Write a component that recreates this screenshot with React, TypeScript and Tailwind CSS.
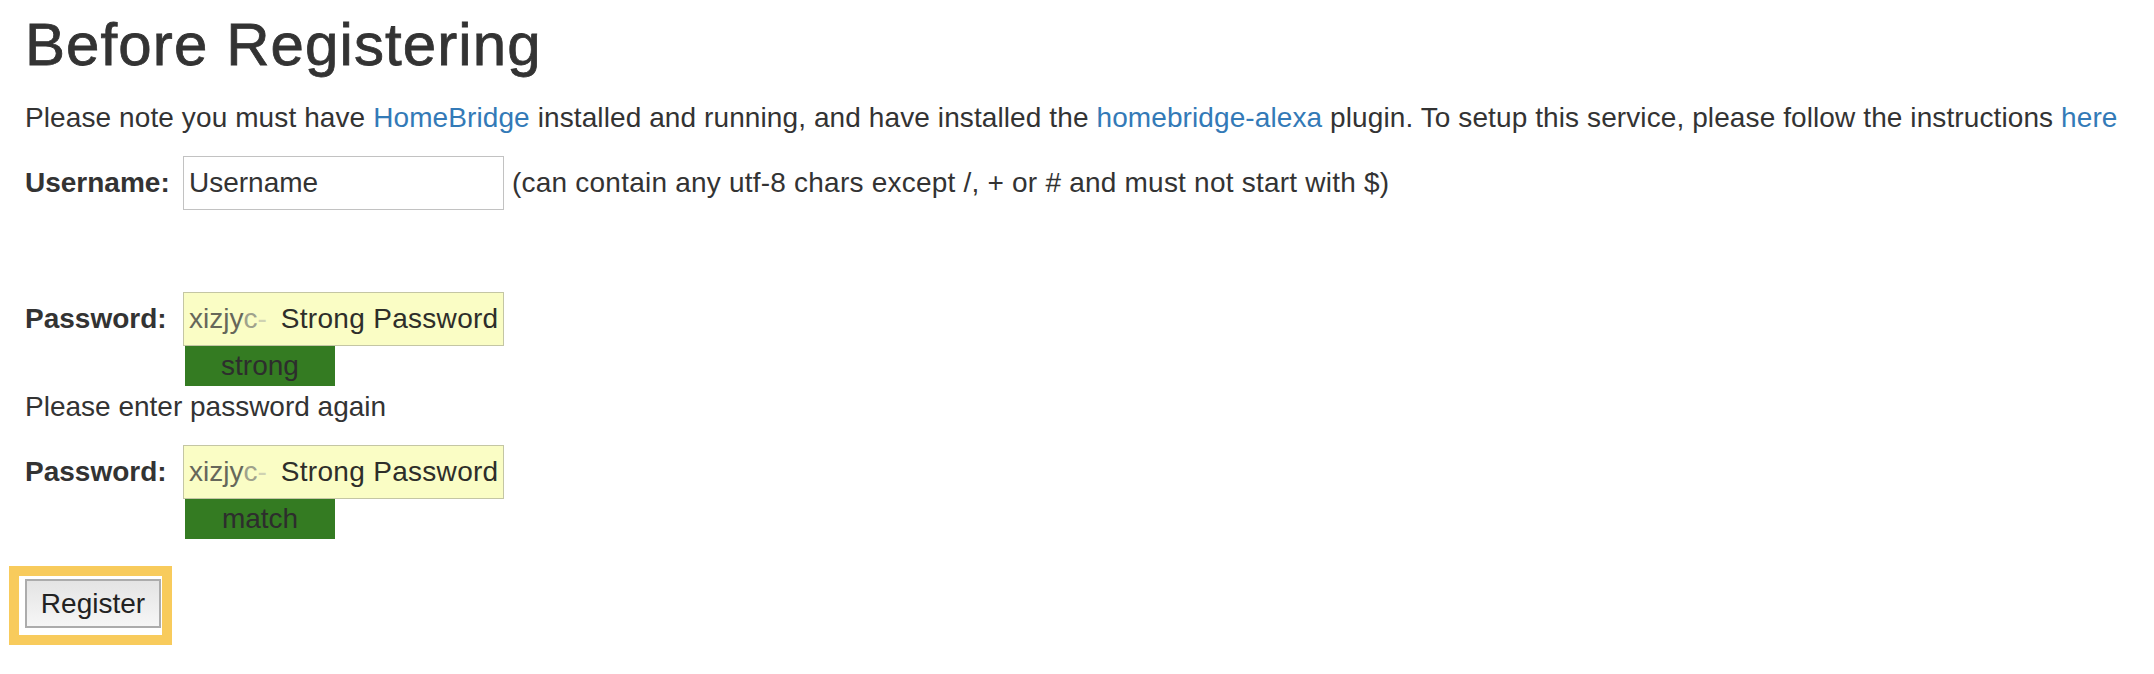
const font = { fontFamily: '"Liberation Sans", Arial, Helvetica, sans-serif' };

function StrengthBar({ label }: { label: string }) {
  return (
    <div className="ml-[160px] flex h-[40px] w-[150px] items-center justify-center bg-[#347b22] text-[28px] text-[#2d2d2d]">
      {label}
    </div>
  );
}

function PasswordRow() {
  return (
    <div className="flex items-center">
      <label className="w-[158px] text-[28px] font-bold text-[#333]">Password:</label>
      <div className="flex h-[54px] w-[321px] items-center overflow-hidden border border-[#c4c6a4] bg-[#fafdc5] pl-[5px] text-[28px] whitespace-nowrap">
        <span className="text-[#66675a]">xizjy</span>
        <span className="text-[#9fa28c]">c</span>
        <span className="text-[#cfd2b2]">-</span>
        <span className="ml-[14px] tracking-[0.3px] text-[#2e2e2a]">Strong Password</span>
      </div>
    </div>
  );
}

export default function App() {
  return (
    <div className="min-h-screen bg-white px-[25px] pt-[12px] text-[#333]" style={font}>
      <h2 className="text-[60px] leading-[66px] font-normal tracking-[1.1px] [-webkit-text-stroke:0.8px_#333]">
        Before Registering
      </h2>
      <p className="mt-[20px] text-[28px] leading-[40px] tracking-[0.1px] whitespace-nowrap">
        Please note you must have <a className="text-[#337ab7]">HomeBridge</a> installed and running, and have installed
        the <a className="text-[#337ab7]">homebridge-alexa</a> plugin. To setup this service, please follow the
        instructions <a className="text-[#337ab7]">here</a>
      </p>

      <div className="mt-[18px] flex items-center">
        <label className="w-[158px] text-[28px] font-bold">Username:</label>
        <input
          readOnly
          value="Username"
          className="h-[54px] w-[321px] border border-[#c2c2c2] bg-white px-[5px] text-[28px] text-[#333] outline-none"
          style={font}
        />
        <span className="ml-[8px] text-[28px] tracking-[0.22px]">
          (can contain any utf-8 chars except /, + or # and must not start with $)
        </span>
      </div>

      <div className="mt-[82px]">
        <PasswordRow />
        <StrengthBar label="strong" />
      </div>

      <div className="mt-[1px] text-[28px] leading-[40px]">Please enter password again</div>

      <div className="mt-[18px]">
        <PasswordRow />
        <StrengthBar label="match" />
      </div>

      <div className="mt-[27px] -ml-[16px] inline-block border-[10px] border-[#f8cb5c] bg-white pt-[3px] pr-[1px] pb-[7px] pl-[6px]">
        <button className="h-[49px] w-[136px] border-2 border-[#acacac] bg-gradient-to-b from-[#e4e4e4] to-[#f6f6f6] text-[28px] text-[#222]">
          Register
        </button>
      </div>
    </div>
  );
}
